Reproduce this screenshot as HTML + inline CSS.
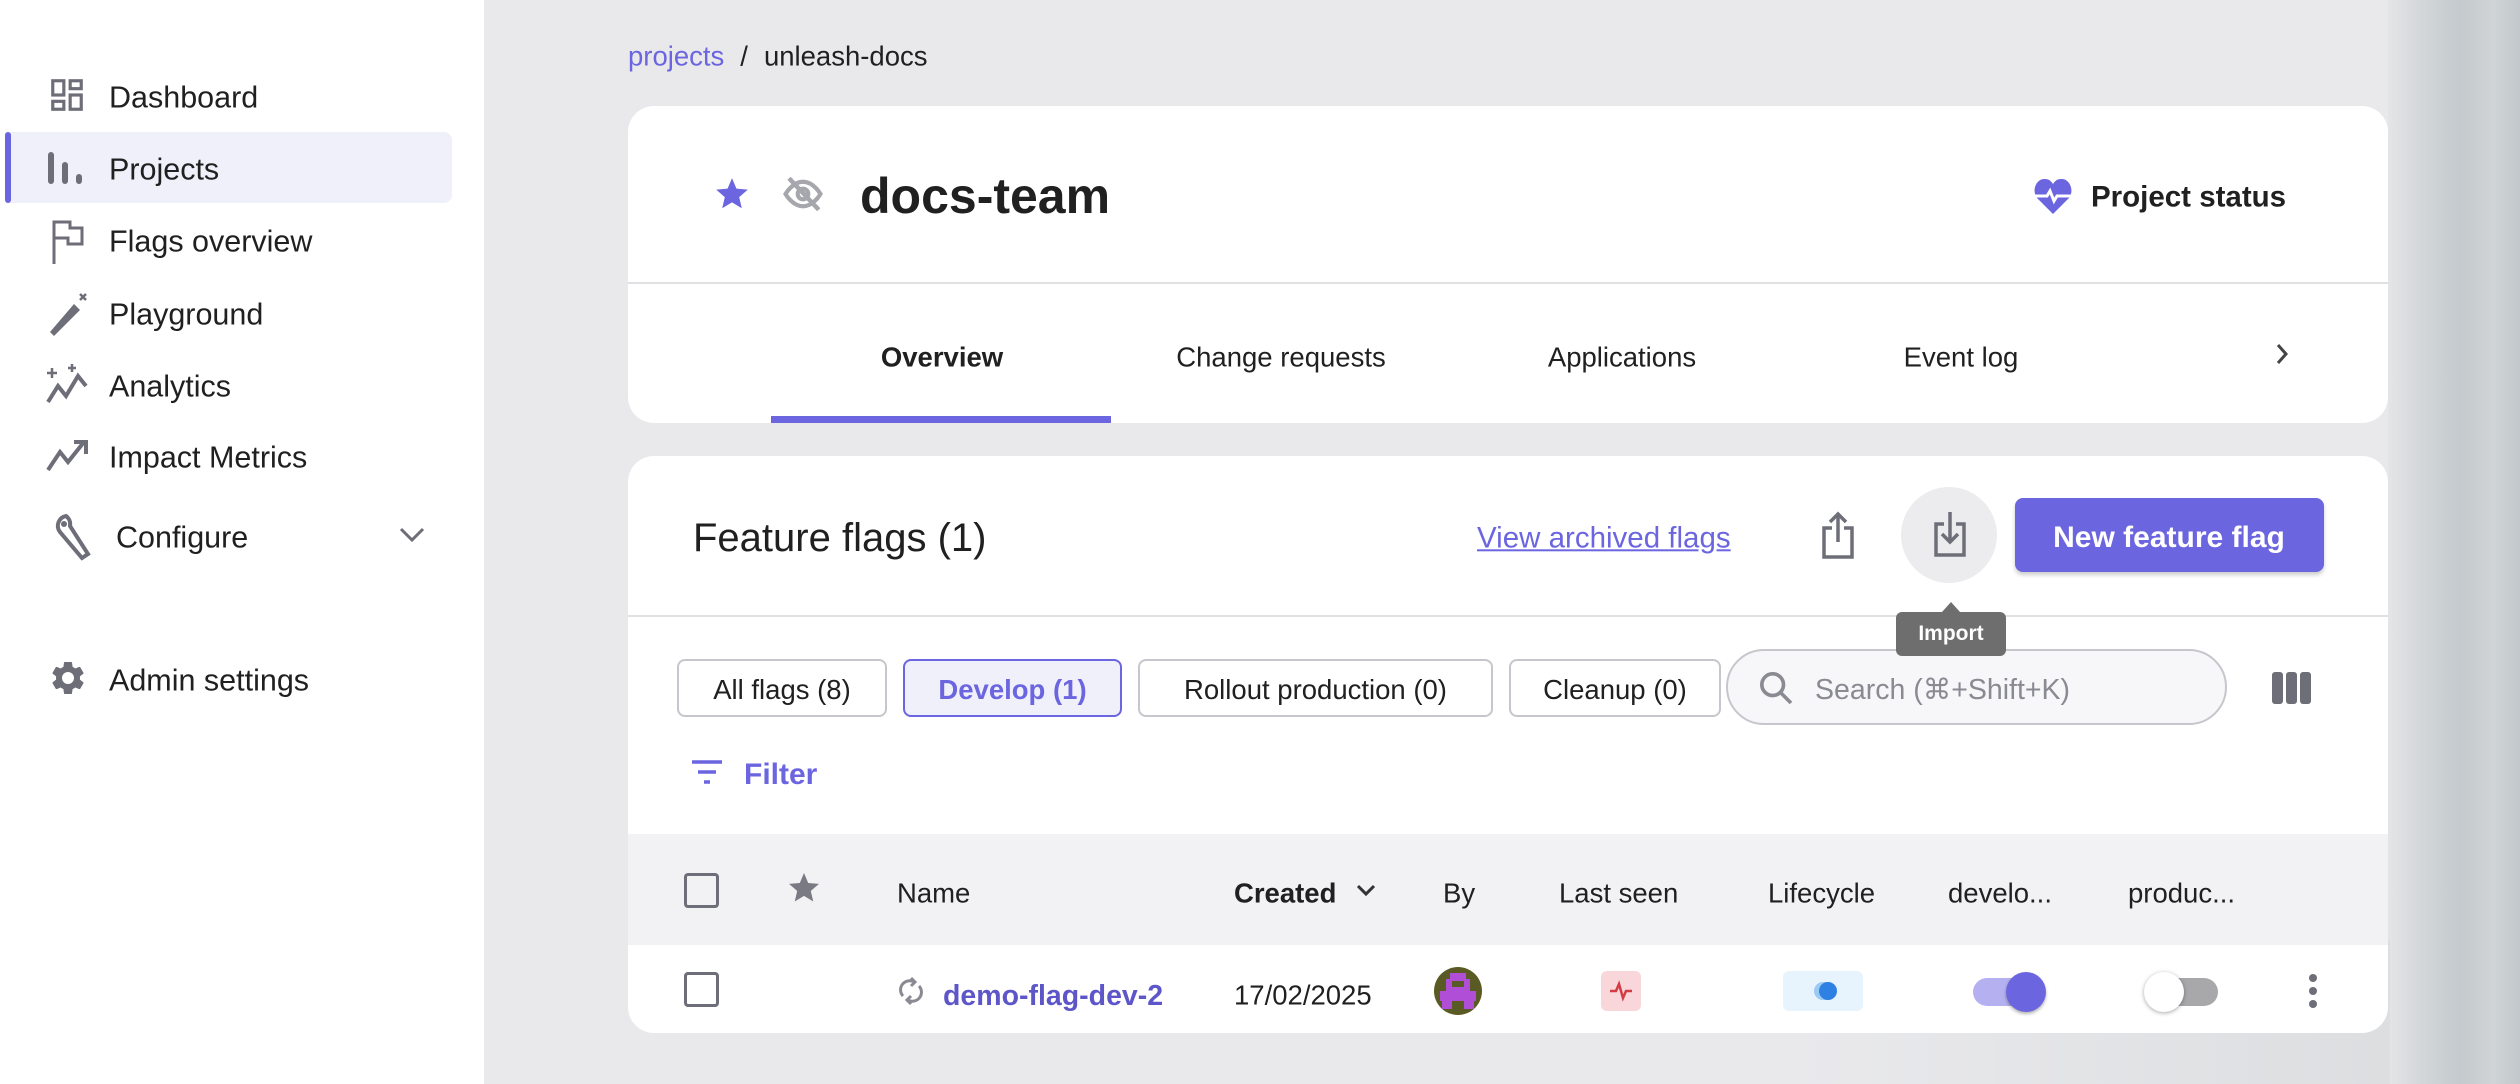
<!DOCTYPE html>
<html><head><meta charset="utf-8">
<style>
*{margin:0;padding:0;box-sizing:border-box}
body{width:2520px;height:1084px;overflow:hidden;background:#e9e9ec;font-family:"Liberation Sans",sans-serif;color:#202021;position:relative}
.a{position:absolute}
.t{position:absolute;transform:translateY(-50%);white-space:nowrap;line-height:1.2;margin-top:3px}
.side{left:0;top:0;width:484px;height:1084px;background:#fff}
.nav{font-size:30.5px;color:#202021}
.card{background:#fff;border-radius:26px}
.chip{position:absolute;top:659px;height:58px;border:2px solid #c6c6cc;border-radius:8px;font-size:27.5px;display:flex;align-items:center;justify-content:center;background:#fff;padding-top:3px}
.h{font-size:27.5px}
</style></head><body>
<!-- right deco -->
<div class="a" style="left:2388px;top:0;width:132px;height:1084px;background:linear-gradient(90deg,#e4e5e7 0%,#d3d7d9 25%,#c4cacd 55%,#d0d4d6 80%,#c2c8cb 100%)"></div>
<div class="a" style="left:1800px;top:940px;width:590px;height:144px;background:linear-gradient(90deg,rgba(233,233,236,0),#dcdee0)"></div>

<div class="a side"></div>
<!-- sidebar -->
<div class="a" style="left:5px;top:132px;width:447px;height:71px;background:#f0f0fb;border-radius:8px"></div>
<div class="a" style="left:5px;top:132px;width:6px;height:71px;background:#6c65e0;border-radius:3px"></div>
<svg class="a" style="left:48px;top:75px" width="38" height="40" viewBox="0 0 24 24" fill="none" stroke="#6e6e78" stroke-width="2"><rect x="3" y="3" width="7" height="9"/><rect x="14" y="3" width="7" height="5"/><rect x="14" y="12" width="7" height="9"/><rect x="3" y="16" width="7" height="5"/></svg>
<div class="t nav" style="left:109px;top:95px">Dashboard</div>
<svg class="a" style="left:46px;top:150px" width="40" height="36" viewBox="0 0 40 36"><rect x="2" y="2" width="6" height="32" rx="3" fill="#6e6e78"/><rect x="16" y="12" width="6" height="22" rx="3" fill="#6e6e78"/><rect x="30" y="24" width="6" height="10" rx="3" fill="#6e6e78"/></svg>
<div class="t nav" style="left:109px;top:167px">Projects</div>
<svg class="a" style="left:50px;top:218px" width="36" height="46" viewBox="0 0 36 46" fill="none" stroke="#6e6e78" stroke-width="3"><path d="M4 46V4h16v6h12v16H18v-6H4"/></svg>
<div class="t nav" style="left:109px;top:239px">Flags overview</div>
<svg class="a" style="left:44px;top:290px" width="46" height="46" viewBox="0 0 46 46"><path d="M6 42 30 14l6 6-26 26z" fill="#6e6e78"/><path d="M36 4l6 6M42 4l-6 6" stroke="#6e6e78" stroke-width="2.5"/></svg>
<div class="t nav" style="left:109px;top:312px">Playground</div>
<svg class="a" style="left:44px;top:362px" width="46" height="44" viewBox="0 0 46 44" fill="none" stroke="#6e6e78" stroke-width="4"><path d="M4 40l10-16 8 10 12-20 8 10"/><path d="M8 6v10M3 11h10M28 2v8M24 6h8" stroke-width="2.5"/></svg>
<div class="t nav" style="left:109px;top:384px">Analytics</div>
<svg class="a" style="left:46px;top:438px" width="44" height="34" viewBox="0 0 44 34" fill="none" stroke="#6e6e78" stroke-width="4"><path d="M2 32l12-18 8 10 16-20M28 4h12v12"/></svg>
<div class="t nav" style="left:109px;top:455px">Impact Metrics</div>
<svg class="a" style="left:52px;top:512px" width="46" height="50" viewBox="0 0 46 50" fill="none" stroke="#6e6e78" stroke-width="4"><path d="M14 4a10 10 0 0 0-6 16l22 26 6-4-18-28a10 10 0 0 0-4-10z"/><circle cx="12" cy="12" r="3" fill="#6e6e78" stroke="none"/></svg>
<div class="t nav" style="left:116px;top:535px">Configure</div>
<svg class="a" style="left:398px;top:526px" width="28" height="18" viewBox="0 0 28 18" fill="none" stroke="#6e6e78" stroke-width="3"><path d="M3 3l11 11 11-11"/></svg>
<svg class="a" style="left:48px;top:658px" width="40" height="40" viewBox="0 0 24 24"><path fill="#6e6e78" d="M19.14 12.940c.04-.3.06-.61.06-.94 0-.32-.02-.64-.07-.94l2.03-1.58a.49.49 0 0 0 .12-.61l-1.92-3.32a.49.49 0 0 0-.59-.22l-2.39.96c-.5-.38-1.030-.7-1.62-.94l-.36-2.54a.48.48 0 0 0-.48-.41h-3.84c-.24 0-.43.17-.47.41l-.36 2.54c-.59.24-1.13.57-1.62.94l-2.39-.96a.49.49 0 0 0-.59.22L2.74 8.87a.48.48 0 0 0 .12.61l2.03 1.58c-.05.3-.09.63-.09.94s.02.64.07.94l-2.03 1.58a.49.49 0 0 0-.12.61l1.92 3.32c.12.22.37.29.59.22l2.39-.96c.5.38 1.03.7 1.62.94l.36 2.54c.05.24.24.41.48.41h3.84c.24 0 .44-.17.47-.41l.36-2.54c.59-.24 1.13-.56 1.62-.94l2.39.96c.22.08.47 0 .59-.22l1.92-3.32a.48.48 0 0 0-.12-.61l-2.01-1.58zM12 15.6A3.6 3.6 0 1 1 12 8.4a3.6 3.6 0 0 1 0 7.2z"/></svg>
<div class="t nav" style="left:109px;top:678px">Admin settings</div>

<!-- breadcrumb -->
<div class="t" style="left:628px;top:53px;font-size:27.5px"><span style="color:#6c65e0">projects</span><span style="margin:0 16px">/</span>unleash-docs</div>

<!-- header card -->
<div class="a card" style="left:628px;top:106px;width:1760px;height:317px"></div>
<svg class="a" style="left:712px;top:175px" width="40" height="38" viewBox="0 0 24 24"><path fill="#6c65e0" d="M12 17.27 18.18 21l-1.64-7.03L22 9.24l-7.19-.61L12 2 9.19 8.63 2 9.24l5.46 4.73L5.82 21z"/></svg>
<svg class="a" style="left:781px;top:173px" width="44" height="42" viewBox="0 0 24 24" fill="none" stroke="#a6a6ad" stroke-width="2.4"><path d="M2 12s4-7 10-7 10 7 10 7-4 7-10 7S2 12 2 12z"/><circle cx="12" cy="12" r="3"/><path d="M4 3l17 18" stroke="#a6a6ad" stroke-width="2.6"/></svg>
<div class="t" style="left:860px;top:193px;font-size:50px;font-weight:bold">docs-team</div>
<svg class="a" style="left:2033px;top:176px" width="40" height="40" viewBox="0 0 40 40"><path fill="#6c65e0" d="M20 38 4 22C-2 14 4 2 12 3c4 0 6 2 8 5 2-3 4-5 8-5 8-1 14 11 8 19z"/><path d="M2 20h12l3-5 4 10 3-5h14" stroke="#fff" stroke-width="3" fill="none"/></svg>
<div class="t" style="left:2091px;top:194px;font-size:29.5px;font-weight:bold">Project status</div>
<div class="a" style="left:628px;top:282px;width:1760px;height:2px;background:#e1e1e4"></div>
<div class="t h" style="left:942px;top:354px;transform:translate(-50%,-50%);font-weight:bold">Overview</div>
<div class="t h" style="left:1281px;top:354px;transform:translate(-50%,-50%)">Change requests</div>
<div class="t h" style="left:1622px;top:354px;transform:translate(-50%,-50%)">Applications</div>
<div class="t h" style="left:1961px;top:354px;transform:translate(-50%,-50%)">Event log</div>
<svg class="a" style="left:2274px;top:342px" width="16" height="24" viewBox="0 0 16 24" fill="none" stroke="#444" stroke-width="3"><path d="M4 3l8 9-8 9"/></svg>
<div class="a" style="left:771px;top:416px;width:340px;height:7px;background:#6c65e0"></div>

<!-- flags card -->
<div class="a card" style="left:628px;top:456px;width:1760px;height:577px;overflow:hidden">
  <div class="a" style="left:0;top:378px;width:1760px;height:111px;background:#f2f2f5"></div>
</div>
<div class="t" style="left:693px;top:535px;font-size:40px">Feature flags (1)</div>
<div class="t" style="left:1477px;top:535px;font-size:29.5px;color:#6c65e0;text-decoration:underline">View archived flags</div>
<svg class="a" style="left:1820px;top:510px" width="36" height="50" viewBox="0 0 36 50" fill="none" stroke="#6e6e78" stroke-width="3.5"><path d="M12 18H4v29h28V18h-8M18 32V4M10 12l8-8 8 8"/></svg>
<div class="a" style="left:1901px;top:487px;width:96px;height:96px;border-radius:50%;background:#ececee"></div>
<svg class="a" style="left:1932px;top:510px" width="36" height="48" viewBox="0 0 36 48" fill="none" stroke="#6e6e78" stroke-width="3.5"><path d="M12 14H4v31h28V14h-8M18 2v30M10 24l8 8 8-8"/></svg>
<div class="a" style="left:2015px;top:498px;width:309px;height:74px;background:#6c65e0;border-radius:8px;box-shadow:0 3px 4px rgba(0,0,0,.2)"></div>
<div class="t" style="left:2169px;top:535px;transform:translate(-50%,-50%);font-size:30px;font-weight:bold;color:#fff">New feature flag</div>
<div class="a" style="left:628px;top:615px;width:1760px;height:2px;background:#e1e1e4"></div>

<div class="chip" style="left:677px;width:210px">All flags (8)</div>
<div class="chip" style="left:903px;width:219px;background:#f0f0fb;border-color:#6c65e0;color:#6c65e0;font-weight:bold">Develop (1)</div>
<div class="chip" style="left:1138px;width:355px">Rollout production (0)</div>
<div class="chip" style="left:1509px;width:212px">Cleanup (0)</div>
<div class="a" style="left:1726px;top:649px;width:501px;height:76px;border:2px solid #c6c6cc;border-radius:38px;background:#f7f7f9"></div>
<svg class="a" style="left:1756px;top:668px" width="40" height="40" viewBox="0 0 24 24" fill="none" stroke="#8a8a93" stroke-width="2.2"><circle cx="10" cy="10" r="6.5"/><path d="M15 15l6 6"/></svg>
<div class="t" style="left:1815px;top:687px;font-size:28.5px;color:#8a8a93">Search (⌘+Shift+K)</div>
<svg class="a" style="left:2271px;top:671px" width="42" height="34" viewBox="0 0 42 34"><rect x="1" y="1" width="11" height="32" rx="3" fill="#6e6e78"/><rect x="15" y="1" width="11" height="32" rx="3" fill="#6e6e78"/><rect x="29" y="1" width="11" height="32" rx="3" fill="#6e6e78"/></svg>
<!-- tooltip -->
<div class="a" style="left:1896px;top:612px;width:110px;height:44px;background:#6e6e6e;border-radius:6px;color:#fff;font-size:21px;font-weight:bold;display:flex;align-items:center;justify-content:center">Import</div>
<div class="a" style="left:1942px;top:602px;width:0;height:0;border-left:9px solid transparent;border-right:9px solid transparent;border-bottom:10px solid #6e6e6e"></div>

<svg class="a" style="left:690px;top:759px" width="34" height="26" viewBox="0 0 34 26" stroke="#6c65e0" stroke-width="3.5"><path d="M2 3h30M8 13h18M14 23h6"/></svg>
<div class="t" style="left:744px;top:772px;font-size:30px;font-weight:bold;color:#6c65e0">Filter</div>

<!-- table header -->
<div class="a" style="left:684px;top:873px;width:35px;height:35px;border:3.5px solid #6e6e78;border-radius:4px"></div>
<svg class="a" style="left:786px;top:870px" width="36" height="36" viewBox="0 0 24 24"><path fill="#7a7a84" d="M12 17.27 18.18 21l-1.64-7.03L22 9.24l-7.19-.61L12 2 9.19 8.63 2 9.24l5.46 4.73L5.82 21z"/></svg>
<div class="t h" style="left:897px;top:890px">Name</div>
<div class="t h" style="left:1234px;top:890px;font-weight:bold">Created</div>
<svg class="a" style="left:1356px;top:884px" width="20" height="14" viewBox="0 0 20 14" fill="none" stroke="#333" stroke-width="3"><path d="M2 2l8 8 8-8"/></svg>
<div class="t h" style="left:1443px;top:890px">By</div>
<div class="t h" style="left:1559px;top:890px">Last seen</div>
<div class="t h" style="left:1768px;top:890px">Lifecycle</div>
<div class="t h" style="left:1948px;top:890px">develo...</div>
<div class="t h" style="left:2128px;top:890px">produc...</div>

<!-- row -->
<div class="a" style="left:684px;top:972px;width:35px;height:35px;border:3.5px solid #6e6e78;border-radius:4px"></div>
<svg class="a" style="left:898px;top:976px" width="26" height="30" viewBox="0 0 26 30" fill="none" stroke="#8a8a93" stroke-width="3"><path d="M5 20a9 9 0 0 1 11-14M21 10a9 9 0 0 1-11 14"/><path d="M13 2l4 4-4 4M13 28l-4-4 4-4"/></svg>
<div class="t" style="left:943px;top:993px;font-size:28.5px;font-weight:bold;color:#5d56c9">demo-flag-dev-2</div>
<div class="t" style="left:1234px;top:992px;font-size:27.5px">17/02/2025</div>
<div class="a" style="left:1434px;top:967px;width:48px;height:48px;border-radius:50%;background:#5a5a24;overflow:hidden">
 <div class="a" style="left:16px;top:6px;width:16px;height:6px;background:#b04ed8"></div>
 <div class="a" style="left:12px;top:12px;width:24px;height:12px;background:#b04ed8"></div>
 <div class="a" style="left:18px;top:14px;width:12px;height:6px;background:#5a5a24"></div>
 <div class="a" style="left:6px;top:24px;width:36px;height:10px;background:#b04ed8"></div>
 <div class="a" style="left:8px;top:34px;width:10px;height:8px;background:#b04ed8"></div>
 <div class="a" style="left:30px;top:34px;width:10px;height:8px;background:#b04ed8"></div>
</div>
<div class="a" style="left:1601px;top:971px;width:40px;height:40px;border-radius:6px;background:#f8d6d9"></div>
<svg class="a" style="left:1609px;top:980px" width="24" height="22" viewBox="0 0 24 22" fill="none" stroke="#d33c44" stroke-width="2.5"><path d="M1 11h6l3-7 4 14 3-7h6"/></svg>
<div class="a" style="left:1783px;top:971px;width:80px;height:40px;border-radius:6px;background:#e8f4fd"></div>
<div class="a" style="left:1814px;top:982px;width:14px;height:18px;border-radius:9px 0 0 9px;background:#9bcaf3"></div>
<div class="a" style="left:1819px;top:982px;width:18px;height:18px;border-radius:50%;background:#2e80e3"></div>
<div class="a" style="left:1973px;top:978px;width:72px;height:28px;border-radius:14px;background:#b5b1f0"></div>
<div class="a" style="left:2006px;top:972px;width:40px;height:40px;border-radius:50%;background:#6c65e0;box-shadow:0 2px 3px rgba(0,0,0,.3)"></div>
<div class="a" style="left:2146px;top:978px;width:72px;height:28px;border-radius:14px;background:#a8a8ab"></div>
<div class="a" style="left:2144px;top:972px;width:40px;height:40px;border-radius:50%;background:#fff;box-shadow:0 1px 4px rgba(0,0,0,.35)"></div>
<div class="a" style="left:2309px;top:974px;width:8px;height:8px;border-radius:50%;background:#6e6e78"></div>
<div class="a" style="left:2309px;top:987px;width:8px;height:8px;border-radius:50%;background:#6e6e78"></div>
<div class="a" style="left:2309px;top:1000px;width:8px;height:8px;border-radius:50%;background:#6e6e78"></div>
</body></html>
